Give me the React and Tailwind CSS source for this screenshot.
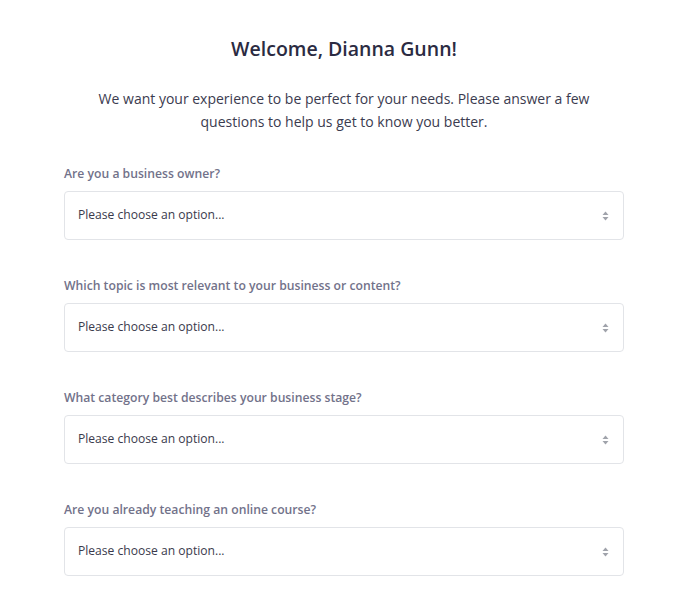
import React from "react";

const questions = [
  "Are you a business owner?",
  "Which topic is most relevant to your business or content?",
  "What category best describes your business stage?",
  "Are you already teaching an online course?",
];

function Arrows() {
  return (
    <svg width="7" height="10" viewBox="0 0 7 10" className="shrink-0">
      <path d="M3.5 0.5 L6.5 4 H0.5 Z" fill="#a0a3ab" />
      <path d="M3.5 9.5 L6.5 6 H0.5 Z" fill="#a0a3ab" />
    </svg>
  );
}

export default function App() {
  return (
    <div
      className="w-[688px] min-h-[605px] bg-white"
      style={{ fontFamily: '"Open Sans", "Noto Sans", sans-serif' }}
    >
      <div className="px-[64px] pt-[36px]">
        <h1 className="text-center text-[19.5px] leading-[26px] font-semibold text-[#2b2b42]">
          Welcome, Dianna Gunn!
        </h1>
        <p className="mt-[25px] text-center text-[14px] leading-[23px] text-[#3b3b4f] px-[30px]">
          We want your experience to be perfect for your needs. Please answer a few questions to help us get to know you better.
        </p>
        <div className="mt-[32px] flex flex-col gap-[37px]">
          {questions.map((q) => (
            <div key={q}>
              <div className="text-[12.2px] leading-[18px] font-semibold text-[#72728a]">{q}</div>
              <div className="mt-[8px] h-[49px] rounded-[4px] border border-[#e2e4e8] flex items-center justify-between pl-[13px] pr-[14px]">
                <span className="text-[12.1px] text-[#3a3a4c]">Please choose an option...</span>
                <Arrows />
              </div>
            </div>
          ))}
        </div>
      </div>
    </div>
  );
}
